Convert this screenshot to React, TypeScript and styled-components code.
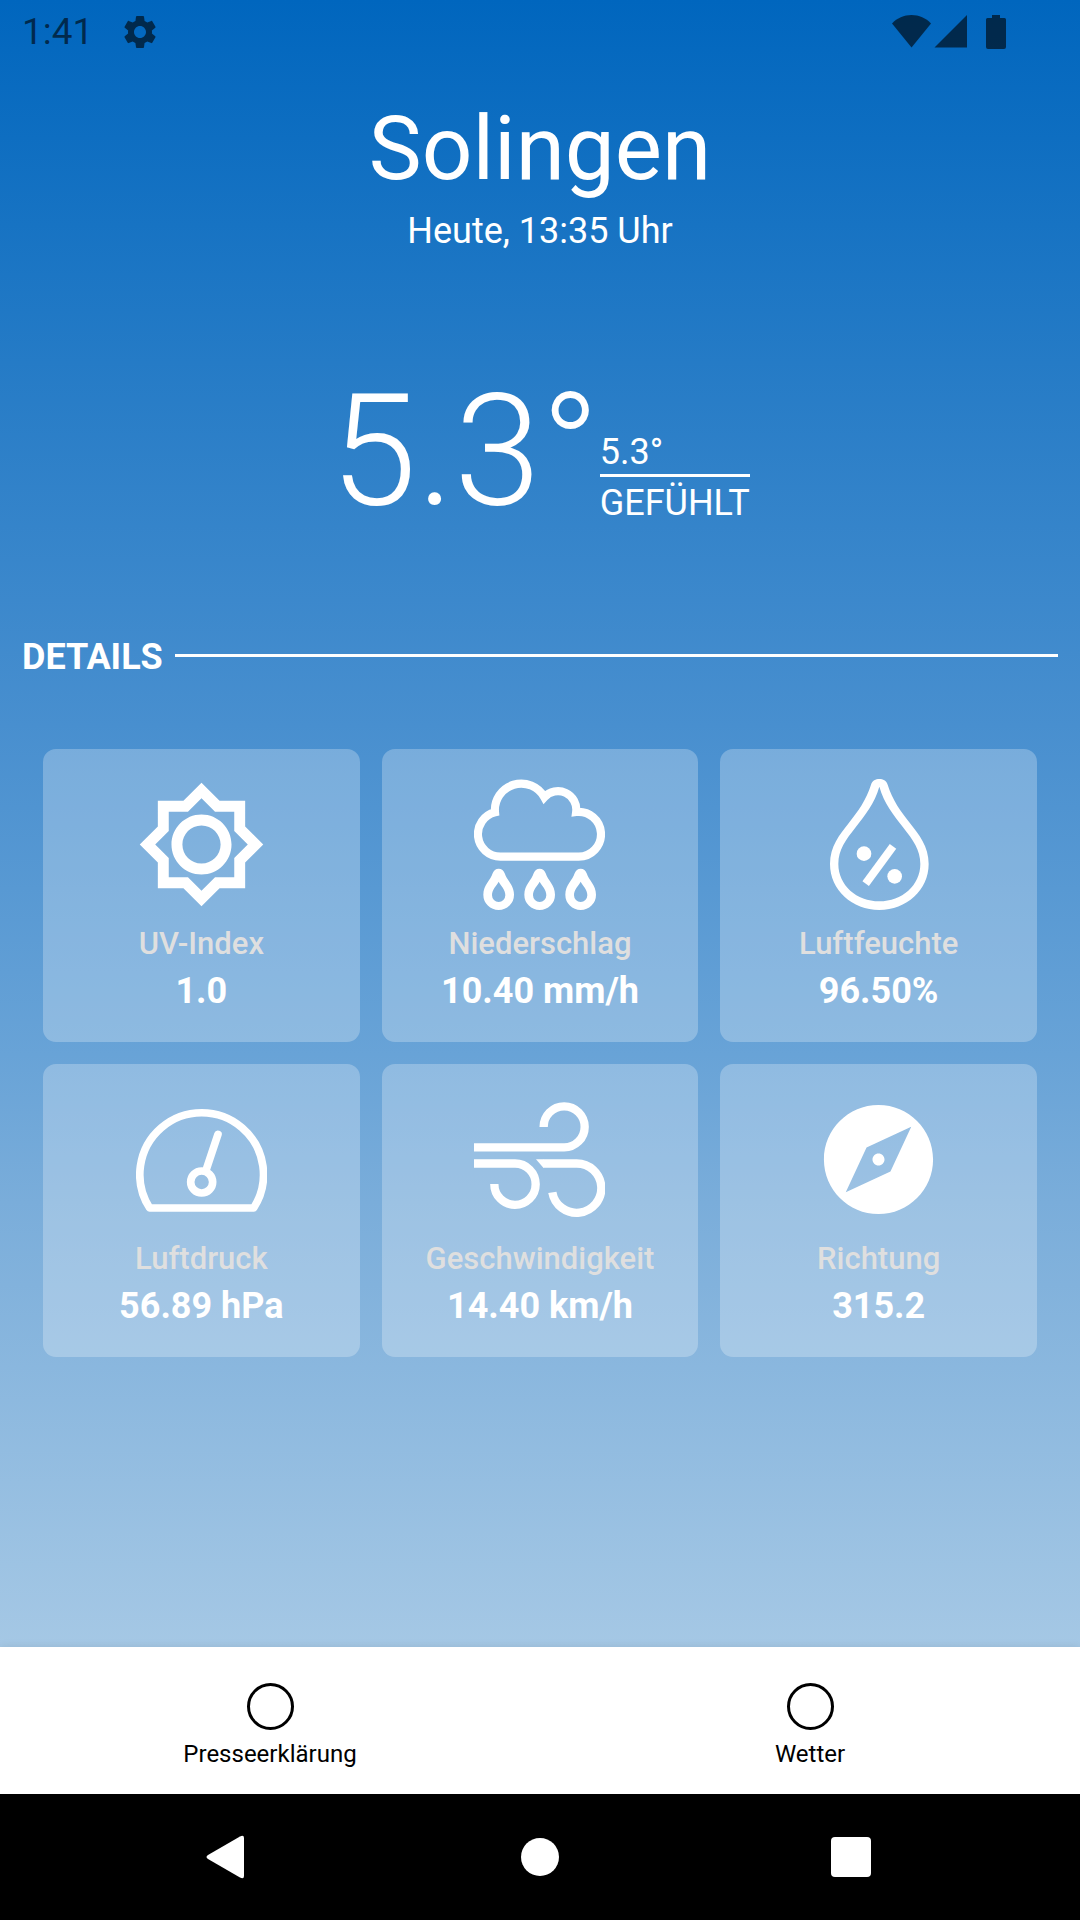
import React from "react";
import styled, { createGlobalStyle } from "styled-components";

const GlobalStyle = createGlobalStyle`
  *, *::before, *::after { box-sizing: border-box; }
  body { margin: 0; font-family: Roboto, "Noto Sans", sans-serif; }
  h1, h2, p, dl, dt, dd { margin: 0; font-weight: 400; }
  button { font: inherit; border: 0; background: none; padding: 0; cursor: pointer; }
  svg { display: block; flex: none; }
`;

const Screen = styled.div`
  min-height: 100vh;
  display: flex;
  flex-direction: column;
  color: #fff;
  background: #000;
`;

const Weather = styled.main`
  flex: 1;
  display: flex;
  flex-direction: column;
  background: linear-gradient(180deg, #0066be 0%, #257bc6 22%, #488fcf 44%, #68a3d7 64%, #7aadda 73%, #a5c8e5 100%);
`;

const StatusBar = styled.header`
  display: flex;
  align-items: center;
  height: 64px;
  padding: 0 72px 0 22px;
  color: rgba(0, 0, 0, 0.6);
`;

const Clock = styled.span`
  font-size: 37px;
  line-height: 44px;
`;

const StatusIcons = styled.div<{ $end?: boolean }>`
  display: flex;
  align-items: center;
  margin-left: ${(p) => (p.$end ? "auto" : "27px")};
`;

const Place = styled.section`
  padding-top: 33px;
  text-align: center;
`;

const City = styled.h1`
  font-size: 89px;
  line-height: 104px;
`;

const Updated = styled.p`
  margin-top: 8px;
  font-size: 36px;
  line-height: 44px;
`;

const Temperature = styled.section`
  display: flex;
  justify-content: center;
  align-items: flex-end;
  margin-top: 104px;
`;

const Current = styled.p`
  font-size: 156px;
  font-weight: 300;
  line-height: 188px;
`;

const FeelsLike = styled.dl`
  display: flex;
  flex-direction: column-reverse;
  padding-bottom: 20px;
  font-size: 36px;
  line-height: 44px;

  dt { padding-top: 4px; }
  dd { border-bottom: 3px solid #fff; }
`;

const SectionHead = styled.div`
  display: flex;
  align-items: center;
  gap: 12px;
  margin-top: 90px;
  padding: 0 22px;

  &::after {
    content: "";
    flex: 1;
    height: 3px;
    margin-bottom: 3px;
    background: #fff;
  }
`;

const SectionTitle = styled.h2`
  font-size: 36px;
  font-weight: 700;
  line-height: 44px;
`;

const Cards = styled.dl`
  display: grid;
  grid-template-columns: repeat(3, 1fr);
  gap: 22px;
  padding: 70px 43px;
`;

const Card = styled.div`
  display: flex;
  flex-direction: column;
  align-items: center;
  padding: 30px 0 29px;
  border-radius: 13px;
  background: rgba(255, 255, 255, 0.26);

  svg { width: 131px; height: 131px; }
`;

const CardLabel = styled.dt`
  margin-top: 14px;
  font-size: 31px;
  font-weight: 500;
  line-height: 40px;
  color: #dfdfdf;
`;

const CardValue = styled.dd`
  margin-top: 5px;
  font-size: 36px;
  font-weight: 700;
  line-height: 44px;
`;

const Tabs = styled.nav`
  display: flex;
  background: #fff;
  box-shadow: 0 -1px 8px rgba(0, 0, 0, 0.08);
`;

const Tab = styled.button`
  flex: 1;
  display: flex;
  flex-direction: column;
  align-items: center;
  gap: 9px;
  padding: 36px 0 25px;
  color: #000;
`;

const TabMark = styled.span`
  width: 47px;
  height: 47px;
  border: 3px solid #000;
  border-radius: 50%;
`;

const TabLabel = styled.span`
  font-size: 24px;
  line-height: 30px;
`;

const SystemNav = styled.nav`
  display: flex;
  align-items: center;
  justify-content: space-between;
  height: 126px;
  padding: 0 204px;
  background: #000;
`;

const NavButton = styled.button`
  width: 50px;
  height: 50px;
`;

const DROP =
  "M389 386C380 386 374 391 371 400C366 419 343 435 343 464A46 46 0 0 0 435 464C435 435 412 419 407 400C404 391 398 386 389 386ZM389 425C383 437 369 448 369 466A20 20 0 0 0 409 466C409 448 395 437 389 425Z";

const SunIcon = () => (
  <svg viewBox="0 0 24 24" fill="#fff" aria-hidden="true">
    <path d="M20 8.69V4h-4.69L12 .69 8.69 4H4v4.69L.69 12 4 15.31V20h4.69L12 23.31 15.31 20H20v-4.69L23.31 12 20 8.69zm-2 5.79V18h-3.52L12 20.48 9.52 18H6v-3.52L3.52 12 6 9.52V6h3.52L12 3.52 14.48 6H18v3.52L20.48 12 18 14.48zM12 6.5c-3.03 0-5.5 2.47-5.5 5.5s2.47 5.5 5.5 5.5 5.5-2.47 5.5-5.5-2.47-5.5-5.5-5.5zm0 9c-1.93 0-3.5-1.57-3.5-3.5s1.57-3.5 3.5-3.5 3.5 1.57 3.5 3.5-1.57 3.5-3.5 3.5z" />
  </svg>
);

const RainIcon = () => (
  <svg viewBox="315 117 393 393" fill="none" aria-hidden="true">
    <path
      d="M394 350H629A67.2 67.2 0 1 0 621.5 216A55 55 0 0 0 526 172A79 79 0 0 0 378 217A67.5 67.5 0 0 0 394 350Z"
      stroke="#fff"
      strokeWidth="24.5"
      strokeMiterlimit="10"
    />
    {[0, 123, 246].map((x) => (
      <path key={x} d={DROP} transform={`translate(${x} 0)`} fill="#fff" fillRule="evenodd" />
    ))}
  </svg>
);

const HumidityIcon = () => (
  <svg viewBox="312 117 393 393" fill="#fff" aria-hidden="true">
    <path
      fillRule="evenodd"
      d="M511 117C500 117 490 122 486 134C472 180 446 215 420 248C392 284 363 318 363 372C363 450 430 510 511 510C592 510 659 450 659 372C659 318 630 284 602 248C576 215 550 180 536 134C532 122 522 117 511 117ZM511 140C497 190 468 225 440 262C410 300 388 330 388 372C388 436 443 484 511 484C579 484 634 436 634 372C634 330 612 300 582 262C554 225 525 190 511 140Z"
    />
    <circle cx="465" cy="341" r="22" />
    <circle cx="557" cy="409" r="22" />
    <path d="M552 319L470 431" stroke="#fff" strokeWidth="24" />
  </svg>
);

const GaugeIcon = () => (
  <svg viewBox="318 132 393 393" fill="none" stroke="#fff" strokeWidth="23" aria-hidden="true">
    <path d="M359 474A185.5 185.5 0 1 1 671 474Z" strokeLinejoin="round" />
    <circle cx="515" cy="396" r="33" />
    <path d="M528 361L564 253" strokeLinecap="round" />
  </svg>
);

const WindIcon = () => (
  <svg viewBox="315 132 393 393" fill="none" stroke="#fff" strokeWidth="25" aria-hidden="true">
    <path d="M315 292H585A61.5 61.5 0 1 0 524 231" />
    <path d="M315 340.5H438A62 62 0 1 1 376 402" />
    <path d="M522 340.5H622A74 74 0 1 1 550 427" />
    <path d="M501 328H523V353Z" fill="#fff" stroke="none" />
  </svg>
);

const CompassIcon = () => (
  <svg viewBox="0 0 24 24" fill="#fff" aria-hidden="true">
    <path d="M12 10.9c-.61 0-1.1.49-1.1 1.1s.49 1.1 1.1 1.1c.61 0 1.1-.49 1.1-1.1s-.49-1.1-1.1-1.1zM12 2C6.48 2 2 6.48 2 12s4.48 10 10 10 10-4.48 10-10S17.52 2 12 2zm2.19 12.19L6 18l3.81-8.19L18 6l-3.81 8.19z" />
  </svg>
);

const details = [
  { label: "UV-Index", value: "1.0", Icon: SunIcon },
  { label: "Niederschlag", value: "10.40 mm/h", Icon: RainIcon },
  { label: "Luftfeuchte", value: "96.50%", Icon: HumidityIcon },
  { label: "Luftdruck", value: "56.89 hPa", Icon: GaugeIcon },
  { label: "Geschwindigkeit", value: "14.40 km/h", Icon: WindIcon },
  { label: "Richtung", value: "315.2", Icon: CompassIcon },
];

export default function App() {
  return (
    <>
      <GlobalStyle />
      <Screen>
        <Weather>
          <StatusBar>
            <Clock>1:41</Clock>
            <StatusIcons>
              <svg width="40" height="40" viewBox="0 0 24 24" fill="currentColor" aria-hidden="true">
                <path d="M19.14 12.94c.04-.3.06-.61.06-.94 0-.32-.02-.64-.07-.94l2.03-1.58c.18-.14.23-.41.12-.61l-1.92-3.32c-.12-.22-.37-.29-.59-.22l-2.39.96c-.5-.38-1.03-.7-1.62-.94l-.36-2.54c-.04-.24-.24-.41-.48-.41h-3.84c-.24 0-.43.17-.47.41l-.36 2.54c-.59.24-1.13.57-1.62.94l-2.39-.96c-.22-.08-.47 0-.59.22L2.74 8.87c-.12.21-.08.47.12.61l2.03 1.58c-.05.3-.09.63-.09.94s.02.64.07.94l-2.03 1.58c-.18.14-.23.41-.12.61l1.92 3.32c.12.22.37.29.59.22l2.39-.96c.5.38 1.03.7 1.62.94l.36 2.54c.05.24.24.41.48.41h3.84c.24 0 .44-.17.47-.41l.36-2.54c.59-.24 1.13-.56 1.62-.94l2.39.96c.22.08.47 0 .59-.22l1.92-3.32c.12-.22.07-.47-.12-.61l-2.01-1.58zM12 15.6c-1.98 0-3.6-1.62-3.6-3.6s1.62-3.6 3.6-3.6 3.6 1.62 3.6 3.6-1.62 3.6-3.6 3.6z" />
              </svg>
            </StatusIcons>
            <StatusIcons $end>
              <svg width="116" height="36" viewBox="0 0 116 36" fill="currentColor" aria-hidden="true">
                <path d="M0 9.500C5 4 12 1 19.500 1S34 4 39 9.500L19.500 33.500Z" />
                <path d="M75 1V33.500H42.500Z" />
                <path d="M100 1h8v3h4.500q1.500 0 1.500 1.500V33q0 2-2 2H96q-2 0-2-2V5.500Q94 4 95.500 4H100Z" />
              </svg>
            </StatusIcons>
          </StatusBar>

          <Place>
            <City>Solingen</City>
            <Updated>Heute, 13:35 Uhr</Updated>
          </Place>

          <Temperature>
            <Current>5.3°</Current>
            <FeelsLike>
              <dt>GEFÜHLT</dt>
              <dd>5.3°</dd>
            </FeelsLike>
          </Temperature>

          <SectionHead>
            <SectionTitle>DETAILS</SectionTitle>
          </SectionHead>

          <Cards>
            {details.map(({ label, value, Icon }) => (
              <Card key={label}>
                <Icon />
                <CardLabel>{label}</CardLabel>
                <CardValue>{value}</CardValue>
              </Card>
            ))}
          </Cards>
        </Weather>

        <Tabs>
          {["Presseerklärung", "Wetter"].map((name) => (
            <Tab key={name} type="button">
              <TabMark />
              <TabLabel>{name}</TabLabel>
            </Tab>
          ))}
        </Tabs>

        <SystemNav>
          <NavButton type="button" aria-label="Zurück">
            <svg width="50" height="50" viewBox="0 0 50 50" fill="#fff" aria-hidden="true">
              <path d="M36 4.500Q40 2.500 40 6V44Q40 47.500 36 45.500L4 27Q1 25 4 23Z" />
            </svg>
          </NavButton>
          <NavButton type="button" aria-label="Startseite">
            <svg width="50" height="50" viewBox="0 0 50 50" fill="#fff" aria-hidden="true">
              <circle cx="25" cy="25" r="19" />
            </svg>
          </NavButton>
          <NavButton type="button" aria-label="Letzte Apps">
            <svg width="50" height="50" viewBox="0 0 50 50" fill="#fff" aria-hidden="true">
              <rect x="5" y="5" width="40" height="40" rx="4" />
            </svg>
          </NavButton>
        </SystemNav>
      </Screen>
    </>
  );
}
